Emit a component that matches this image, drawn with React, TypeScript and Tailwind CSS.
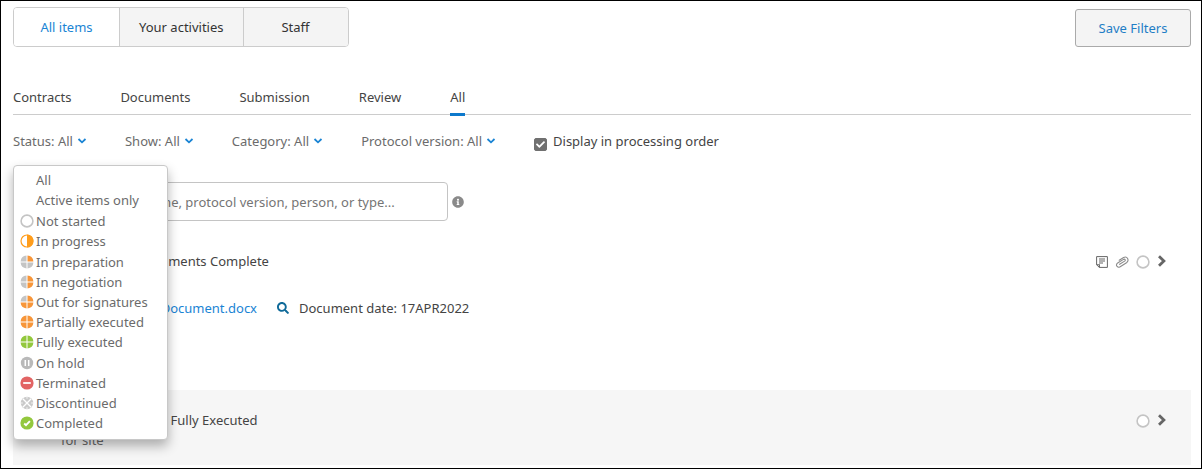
import { useState } from 'react';
import { FaCheck, FaInfoCircle, FaSearch } from 'react-icons/fa';

type StatusKind =
  | 'none'
  | 'empty'
  | 'half'
  | 'quarter'
  | 'twoQuarters'
  | 'threeQuarters'
  | 'fourQuarters'
  | 'executed'
  | 'hold'
  | 'terminated'
  | 'discontinued'
  | 'completed';

const GREY = '#c4c4c4';
const ORANGE = '#f7963a';
const GREEN = '#93c83d';

// quadrant colours, clockwise from top right
const quadrants: Partial<Record<StatusKind, string[]>> = {
  quarter: [ORANGE, GREY, GREY, GREY],
  twoQuarters: [ORANGE, ORANGE, GREY, GREY],
  threeQuarters: [ORANGE, ORANGE, ORANGE, GREY],
  fourQuarters: [ORANGE, ORANGE, ORANGE, ORANGE],
  executed: [GREEN, GREEN, GREEN, GREEN],
};

const statusGroups: { label: string; kind: StatusKind }[][] = [
  [
    { label: 'All', kind: 'none' },
    { label: 'Active items only', kind: 'none' },
  ],
  [
    { label: 'Not started', kind: 'empty' },
    { label: 'In progress', kind: 'half' },
  ],
  [
    { label: 'In preparation', kind: 'quarter' },
    { label: 'In negotiation', kind: 'twoQuarters' },
    { label: 'Out for signatures', kind: 'threeQuarters' },
    { label: 'Partially executed', kind: 'fourQuarters' },
    { label: 'Fully executed', kind: 'executed' },
  ],
  [
    { label: 'On hold', kind: 'hold' },
    { label: 'Terminated', kind: 'terminated' },
    { label: 'Discontinued', kind: 'discontinued' },
    { label: 'Completed', kind: 'completed' },
  ],
];

const views = ['All items', 'Your activities', 'Staff'];
const tabs = ['Contracts', 'Documents', 'Submission', 'Review', 'All'];

function StatusIcon({ kind }: { kind: StatusKind }) {
  const parts = quadrants[kind];
  return (
    <svg viewBox="0 0 14 14" className="size-3.5 shrink-0" aria-hidden="true">
      {kind === 'empty' && <circle cx="7" cy="7" r="5.9" fill="#fff" stroke={GREY} strokeWidth="1.6" />}
      {kind === 'half' && (
        <>
          <circle cx="7" cy="7" r="6" fill="#fff" stroke="#ff9d1c" strokeWidth="1.2" />
          <path d="M7 .6a6.4 6.4 0 0 1 0 12.8z" fill="#ff9d1c" />
        </>
      )}
      {parts && (
        <>
          <path d="M7.5 .6a6.4 6.4 0 0 1 5.9 5.9H7.5z" fill={parts[0]} />
          <path d="M13.4 7.5a6.4 6.4 0 0 1-5.9 5.9V7.5z" fill={parts[1]} />
          <path d="M6.5 13.4A6.4 6.4 0 0 1 .6 7.5h5.9z" fill={parts[2]} />
          <path d="M.6 6.5A6.4 6.4 0 0 1 6.5 .6v5.9z" fill={parts[3]} />
        </>
      )}
      {kind === 'hold' && (
        <>
          <circle cx="7" cy="7" r="6.2" fill="#b9b9b9" />
          <path d="M5.3 4v6M8.7 4v6" stroke="#fff" strokeWidth="1.5" />
        </>
      )}
      {kind === 'terminated' && (
        <>
          <circle cx="7" cy="7" r="6.6" fill="#e26464" />
          <path d="M3.2 7h7.6" stroke="#fff" strokeWidth="1.8" />
        </>
      )}
      {kind === 'discontinued' && (
        <>
          <circle cx="7" cy="7" r="6.2" fill="#cacaca" />
          <path d="M2.8 2.8l8.4 8.4M11.2 2.8l-8.4 8.4" stroke="#fff" strokeWidth="1.3" />
          <path d="M7 .8v2M7 11.2v2M.8 7h2M11.2 7h2" stroke="#fff" strokeWidth=".8" />
        </>
      )}
      {kind === 'completed' && (
        <>
          <circle cx="7" cy="7" r="6.6" fill={GREEN} />
          <path d="M4.2 7.5l1.8 1.7 3.9-4" fill="none" stroke="#fff" strokeWidth="1.9" />
        </>
      )}
    </svg>
  );
}

function Caret() {
  return (
    <svg viewBox="0 0 9 6" className="h-1.5 w-2.5" fill="none" stroke="#1a84d4" strokeWidth="1.8" aria-hidden="true">
      <path d="M1 1l3.5 3.3L8 1" />
    </svg>
  );
}

function FilterButton({ label, open, onClick }: { label: string; open?: boolean; onClick?: () => void }) {
  return (
    <button
      type="button"
      aria-haspopup="menu"
      aria-expanded={!!open}
      onClick={onClick}
      className="flex items-center gap-1 text-[#6b6b6b]"
    >
      {label}
      <Caret />
    </button>
  );
}

function StatusMenu() {
  return (
    <div
      role="menu"
      aria-label="Status"
      className="absolute top-full left-0 z-10 mt-3.5 flex w-[155px] flex-col gap-px rounded border border-[#c8c8c8] bg-white pt-1 pb-1.5 shadow-[0_6px_12px_rgba(0,0,0,0.3)]"
    >
      {statusGroups.map(group => (
        <div key={group[0].label} role="group">
          {group.map(item => (
            <button
              key={item.label}
              type="button"
              role="menuitem"
              className="flex w-full items-center gap-0.5 pl-1.5 text-left leading-5 whitespace-nowrap text-[#6b6b6b]"
            >
              <StatusIcon kind={item.kind} />
              {item.label}
            </button>
          ))}
        </div>
      ))}
    </div>
  );
}

function OpenArrow({ label }: { label: string }) {
  return (
    <button type="button" aria-label={label} className="pb-0.5">
      <svg viewBox="0 0 10 12" className="h-3 w-2.5" fill="none" stroke="#666" strokeWidth="2.8" aria-hidden="true">
        <path d="M2 1.2L6.9 6 2 10.8" />
      </svg>
    </button>
  );
}

export default function App() {
  const [view, setView] = useState('All items');
  const [tab, setTab] = useState('All');
  const [menuOpen, setMenuOpen] = useState(true);
  const [ordered, setOrdered] = useState(true);

  return (
    <div className="flex min-h-screen flex-col border border-black bg-white pr-2.5 pl-3 font-['Noto_Sans',sans-serif] text-[13px] leading-5 text-[#444]">
      {/* View switch */}
      <header className="flex items-start justify-between pt-1.5">
        <div className="flex h-10 overflow-hidden rounded border border-[#ccc]">
          {views.map(name => (
            <button
              key={name}
              type="button"
              onClick={() => setView(name)}
              className={`min-w-[105px] border-l border-[#ccc] px-[19px] first:border-l-0 ${
                view === name ? 'bg-white text-[#1a84d4]' : 'bg-[#f4f4f4] text-[#333]'
              }`}
            >
              {name}
            </button>
          ))}
        </div>
        <button
          type="button"
          className="mt-0.5 h-[38px] w-[116px] rounded-[3px] border border-[#aaa] bg-[#f4f4f4] text-[#1f7ec6]"
        >
          Save Filters
        </button>
      </header>

      {/* Tabs */}
      <nav className="mt-10 flex gap-[49px] border-b border-[#ccc]">
        {tabs.map(name => (
          <button
            key={name}
            type="button"
            onClick={() => setTab(name)}
            className={`-mb-0.5 border-b-3 pb-1.5 ${tab === name ? 'border-[#0d79cc]' : 'border-transparent'}`}
          >
            {name}
          </button>
        ))}
      </nav>

      {/* Filters */}
      <div className="mt-4 flex items-center gap-[38px]">
        <div className="relative">
          <FilterButton label="Status: All" open={menuOpen} onClick={() => setMenuOpen(!menuOpen)} />
          {menuOpen && <StatusMenu />}
        </div>
        <FilterButton label="Show: All" />
        <FilterButton label="Category: All" />
        <FilterButton label="Protocol version: All" />
        <label className="flex items-center gap-1.5">
          <span className="relative mt-1.5 flex size-[13px]">
            <input
              type="checkbox"
              checked={ordered}
              onChange={e => setOrdered(e.target.checked)}
              className="size-full appearance-none rounded-xs border border-[#707070] checked:bg-[#707070]"
            />
            {ordered && <FaCheck className="pointer-events-none absolute inset-0.5 size-[9px] text-white" />}
          </span>
          Display in processing order
        </label>
      </div>

      {/* Search */}
      <div className="mt-[31px] flex items-center gap-1">
        <input
          type="search"
          aria-label="Search items"
          placeholder="Search by item, name, protocol version, person, or type..."
          className="h-[39px] w-[435px] rounded border border-[#c4c4c4] pl-[33px] placeholder:text-[#757575]"
        />
        <FaInfoCircle className="size-3 text-[#8a8a8a]" />
      </div>

      {/* Items */}
      <main className="mt-[30px] flex flex-col">
        <section className="flex h-[139px] items-start justify-between pr-6 pl-12">
          <div>
            <h2>All Essential Documents Complete</h2>
            <div className="mt-[27px] flex items-center">
              <a href="#document" className="w-[196px] text-right text-[#1a84d4]">
                New Document.docx
              </a>
              <FaSearch className="mr-2.5 ml-5 size-3 text-[#0f6a99]" />
              <span>Document date: 17APR2022</span>
            </div>
          </div>
          <div className="flex items-center gap-[7px] pt-1">
            <svg viewBox="0 0 12 12" className="size-3" fill="none" stroke="#666" aria-hidden="true">
              <path d="M.6 .6h10.8v10.8H3.4L.6 8.8z" />
              <path d="M.6 8.8h2.8v2.6M3 3h6M3 5h6M3 7h4" strokeWidth="1.1" />
            </svg>
            <svg
              viewBox="0 0 14 12"
              className="h-3 w-3.5"
              fill="none"
              stroke="#8a8a8a"
              strokeWidth="1.1"
              strokeLinecap="round"
              aria-hidden="true"
            >
              <path d="M4.6 8.3l5-3.2c1.300-.9.3-2.500-1.100-1.700L3 6.800C.1 8.700 1.900 12.400 5.200 10.700l6.300-4C14.600 4.500 12.300-.3 8.600 1.500L4.200 4.200" />
            </svg>
            <StatusIcon kind="empty" />
            <OpenArrow label="Open All Essential Documents Complete" />
          </div>
        </section>

        <section className="flex items-start justify-between bg-[#f6f6f6] pt-5 pr-6 pb-[15px] pl-12">
          <div>
            <h2>Study Agreement Fully Executed</h2>
            <p className="text-[#6b6b6b]">for site</p>
          </div>
          <div className="flex items-center gap-[7px] pt-1">
            <StatusIcon kind="empty" />
            <OpenArrow label="Open Study Agreement Fully Executed" />
          </div>
        </section>
      </main>
    </div>
  );
}
